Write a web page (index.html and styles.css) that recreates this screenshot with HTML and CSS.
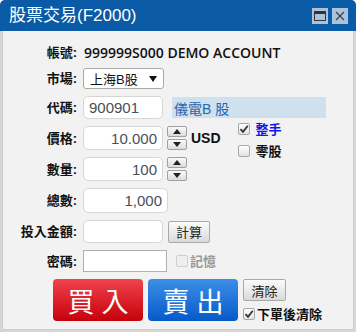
FILE: index.html
```html
<!DOCTYPE html>
<html lang="zh-Hant">
<head>
    <meta charset="UTF-8">
    <meta name="viewport" content="width=device-width, initial-scale=1.0">
    <title>股票交易(F2000)</title>
    <link rel="stylesheet" href="styles.css">
</head>
<body>
    <div class="window">
        <div class="titlebar">
            <span class="title">股票交易(F2000)</span>
            <div class="win-btns">
                <span class="win-btn">
                    <svg width="12" height="10" viewBox="0 0 12 10"><rect x="0.5" y="0.5" width="11" height="9" fill="none" stroke="#333"/><rect x="0" y="0" width="12" height="3" fill="#333"/></svg>
                </span>
                <span class="win-btn">
                    <svg width="10" height="10" viewBox="0 0 10 10"><path d="M1 1L9 9M9 1L1 9" stroke="#444" stroke-width="1.3"/></svg>
                </span>
            </div>
        </div>

        <div class="panel">
            <div class="row row-account">
                <span class="lbl">帳號:</span>
                <span class="account">999999S000 DEMO ACCOUNT</span>
            </div>

            <div class="row row-market">
                <span class="lbl">市場:</span>
                <div class="select">
                    <span>上海B股</span>
                    <svg width="8" height="6" viewBox="0 0 8 6"><path d="M0 0H8L4 6Z" fill="#111"/></svg>
                </div>
            </div>

            <div class="row row-code">
                <span class="lbl">代碼:</span>
                <input class="field w80" type="text" value="900901">
                <span class="stock-name">儀電B 股</span>
            </div>

            <div class="row row-price">
                <span class="lbl">價格:</span>
                <input class="field num w80" type="text" value="10.000">
                <div class="spin">
                    <span class="spin-btn"><svg width="8" height="5" viewBox="0 0 8 5"><path d="M0 5H8L4 0Z" fill="#222"/></svg></span>
                    <span class="spin-btn"><svg width="8" height="5" viewBox="0 0 8 5"><path d="M0 0H8L4 5Z" fill="#222"/></svg></span>
                </div>
                <span class="currency">USD</span>
                <div class="lot-type">
                    <label class="check">
                        <span class="box"><svg width="10" height="10" viewBox="0 0 10 10"><path d="M1.5 5.2L4 7.8L8.8 1.8" fill="none" stroke="#333" stroke-width="1.8"/></svg></span>
                        <span class="blue">整手</span>
                    </label>
                    <label class="check">
                        <span class="box"></span>
                        <span>零股</span>
                    </label>
                </div>
            </div>

            <div class="row row-qty">
                <span class="lbl">數量:</span>
                <input class="field num w80" type="text" value="100">
                <div class="spin">
                    <span class="spin-btn"><svg width="8" height="5" viewBox="0 0 8 5"><path d="M0 5H8L4 0Z" fill="#222"/></svg></span>
                    <span class="spin-btn"><svg width="8" height="5" viewBox="0 0 8 5"><path d="M0 0H8L4 5Z" fill="#222"/></svg></span>
                </div>
            </div>

            <div class="row row-total">
                <span class="lbl">總數:</span>
                <input class="field num w85" type="text" value="1,000">
            </div>

            <div class="row row-invest">
                <span class="lbl">投入金額:</span>
                <input class="field w80" type="text" value="">
                <button class="btn btn-calc">計算</button>
            </div>

            <div class="row row-pwd">
                <span class="lbl">密碼:</span>
                <input class="pwd" type="password" value="">
                <label class="check disabled remember">
                    <span class="box"></span>
                    <span>記憶</span>
                </label>
            </div>

            <div class="row row-actions">
                <button class="trade buy">買入</button>
                <button class="trade sell">賣出</button>
                <div class="clear-col">
                    <button class="btn">清除</button>
                    <label class="check">
                        <span class="box"><svg width="10" height="10" viewBox="0 0 10 10"><path d="M1.5 5.2L4 7.8L8.8 1.8" fill="none" stroke="#333" stroke-width="1.8"/></svg></span>
                        <span>下單後清除</span>
                    </label>
                </div>
            </div>
        </div>
    </div>
</body>
</html>
```

FILE: styles.css
```css
body {
    margin: 0;
    background: #fff;
    font-family: "Liberation Sans", "Noto Sans CJK TC", sans-serif;
}

.window {
    width: 356px;
    height: 332px;
    display: flex;
    flex-direction: column;
    background: #d6d6d6;
    border-radius: 5px 5px 0 0;
}

.titlebar {
    height: 31px;
    flex: none;
    display: flex;
    align-items: center;
    padding: 0 8px 0 9px;
    background: #0b5aa6;
    border-radius: 5px 5px 0 0;
    color: #fff;
}

.title {
    font-size: 17px;
    line-height: 1;
}

.win-btns {
    margin-left: auto;
    display: flex;
    gap: 4px;
}

.win-btn {
    width: 16px;
    height: 16px;
    display: flex;
    align-items: center;
    justify-content: center;
    background: #a9c3dc;
}

.panel {
    flex: 1;
    margin: 0 2px 2px;
    padding-top: 13px;
    display: flex;
    flex-direction: column;
    gap: 7px;
    background: #f2f2f2;
    border: 1px solid #cdcdcd;
    border-top: none;
}

.row {
    display: flex;
    align-items: center;
}

.row-account { height: 17px; }
.row-market { height: 21px; }
.row-code { height: 23px; }
.row-price { height: 24px; }
.row-qty { height: 24px; }
.row-total { height: 25px; }
.row-invest { height: 23px; }
.row-pwd { height: 22px; }
.row-actions { height: 42px; padding-left: 50px; align-items: stretch; }

.lbl {
    width: 74px;
    margin-right: 6px;
    flex: none;
    text-align: right;
    font-size: 13px;
    font-weight: bold;
    color: #111;
    line-height: 1;
}

.account {
    margin-left: 1px;
    font-family: "Open Sans", sans-serif;
    font-size: 14px;
    font-weight: 600;
    color: #111;
    line-height: 1;
}

.select {
    box-sizing: border-box;
    width: 81px;
    height: 21px;
    display: flex;
    align-items: center;
    justify-content: space-between;
    padding: 0 6px;
    background: #fff;
    border: 1px solid #a9a9a9;
    border-radius: 3px;
    font-size: 13px;
    color: #111;
}

.field {
    box-sizing: border-box;
    height: 100%;
    padding: 0 5px;
    background: #fff;
    border: 1px solid #d6d6d6;
    border-radius: 5px;
    font-family: "Liberation Sans", sans-serif;
    font-size: 15px;
    color: #4a4f5a;
    outline: none;
}

.w80 { width: 80px; }
.w85 { width: 85px; }
.num { text-align: right; }

.stock-name {
    box-sizing: border-box;
    width: 154px;
    height: 21px;
    margin-left: 9px;
    padding-left: 2px;
    display: flex;
    align-items: center;
    background: #cfe0ee;
    color: #2766ad;
    font-size: 14px;
}

.spin {
    margin-left: 4px;
    display: flex;
    flex-direction: column;
    gap: 2px;
}

.spin-btn {
    box-sizing: border-box;
    width: 20px;
    height: 11px;
    display: flex;
    align-items: center;
    justify-content: center;
    background: linear-gradient(#fafafa, #dcdcdc);
    border: 1px solid #a0a0a0;
    border-radius: 2px;
}

.currency {
    margin-left: 4px;
    font-size: 14px;
    font-weight: bold;
    color: #111;
}

.lot-type {
    margin-left: 17px;
    align-self: flex-start;
    margin-top: -4px;
    display: flex;
    flex-direction: column;
    gap: 8px;
}

.check {
    height: 14px;
    display: flex;
    align-items: center;
    gap: 6px;
    font-size: 13px;
    font-weight: bold;
    color: #111;
    line-height: 1;
}

.box {
    box-sizing: border-box;
    width: 12px;
    height: 12px;
    display: flex;
    align-items: center;
    justify-content: center;
    background: linear-gradient(#fff, #e2e2e2);
    border: 1px solid #a8a8a8;
    border-radius: 2px;
}

.blue { color: #1414ee; }

.disabled { color: #9a9a9a; gap: 2px; }
.disabled .box { border-color: #cfcfcf; background: #eee; }
.remember { margin-left: 9px; }

.pwd {
    box-sizing: border-box;
    width: 84px;
    height: 100%;
    background: #fff;
    border: 1px solid #b0b0b0;
    border-radius: 0;
    outline: none;
}

.btn {
    box-sizing: border-box;
    width: 42px;
    height: 22px;
    padding: 0;
    background: linear-gradient(#fbfbfb, #dadada);
    border: 1px solid #a9a9a9;
    border-radius: 2px;
    font-family: "Liberation Sans", "Noto Sans CJK TC", sans-serif;
    font-size: 13px;
    color: #222;
}

.btn-calc { margin-left: 5px; }

.trade {
    box-sizing: border-box;
    width: 90px;
    height: 42px;
    padding: 0 0 0 7px;
    border: none;
    border-radius: 4px;
    font-family: "Noto Sans CJK TC", sans-serif;
    font-size: 27px;
    letter-spacing: 7px;
    color: #fff;
}

.buy { background: linear-gradient(#f0434c, #c6000b); }
.sell { margin-left: 5px; background: linear-gradient(#3d8fe8, #0759c9); }

.clear-col {
    margin-left: 5px;
    display: flex;
    flex-direction: column;
    justify-content: space-between;
}

.clear-col .btn { width: 43px; }
.clear-col .check { gap: 2px; }
```
